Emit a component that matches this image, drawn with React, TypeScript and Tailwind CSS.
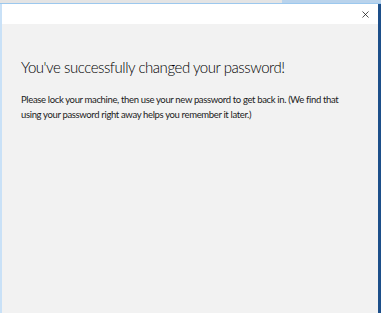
import { X } from 'lucide-react';

export default function App() {
  return (
    <div className="w-[381px] h-[319px] flex flex-col bg-white overflow-hidden" style={{ fontFamily: 'Lato, "Noto Sans", sans-serif' }}>
      {/* window behind the dialog */}
      <div className="flex h-[3px] shrink-0">
        <div className="w-[282px] bg-[#e4e4e4]" />
        <div className="flex-1 bg-[#b9d3ec]" />
      </div>
      <div className="h-px bg-[#9cc8ee] shrink-0" />
      <div className="flex flex-1">
        <div className="w-[2px] bg-[#c9e1f7]" />
        <div className="flex-1 flex flex-col">
          <div className="h-[20px] bg-white flex items-center justify-end pr-[7px]">
            <X className="w-[11px] h-[11px] text-[#111]" strokeWidth={1.6} />
          </div>
          <div className="flex-1 bg-[#f2f2f2] pl-[19px] pr-3 pt-[34px]">
            <h1 className="text-[15px] font-light text-black leading-tight tracking-[-0.45px]">
              You've successfully changed your password!
            </h1>
            <p className="mt-[15px] max-w-[322px] text-[9.5px] leading-[15px] text-[#1b1b1b] tracking-[-0.35px]">
              Please lock your machine, then use your new password to get back in. (We find that using your password right away helps you remember it later.)
            </p>
          </div>
        </div>
        <div className="w-[3px] bg-[#1d4f8a]" />
      </div>
      <div className="h-[6px] bg-white shrink-0" />
    </div>
  );
}
